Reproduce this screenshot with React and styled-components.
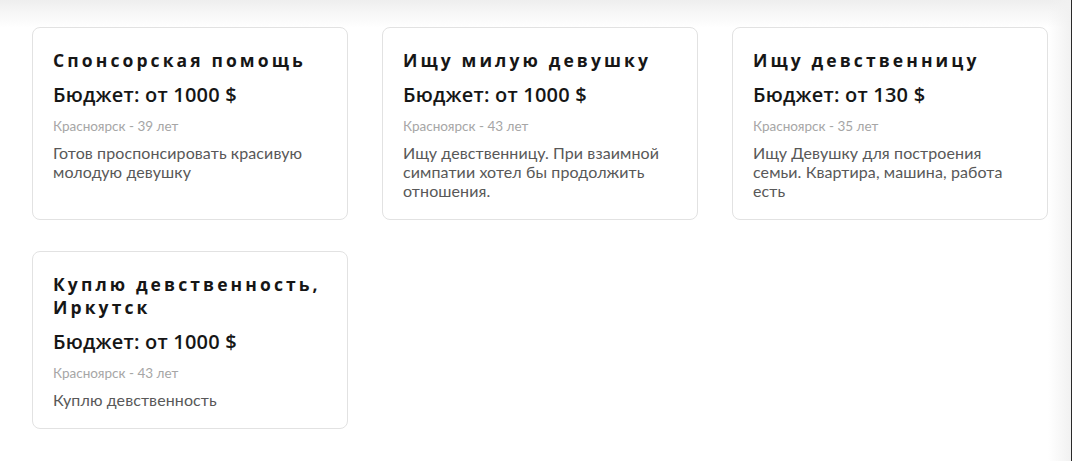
import React from 'react';
import styled, { createGlobalStyle } from 'styled-components';

const GlobalStyle = createGlobalStyle`
    html, body {
        margin: 0;
        padding: 0;
        background: #ffffff;
    }
    body {
        font-family: "Open Sans", "Lato", sans-serif;
    }
`;

const Page = styled.div`
    width: 1072px;
    height: 461px;
    box-sizing: border-box;
    overflow: hidden;
    background: linear-gradient(to bottom, #eeeeee 0px, #f6f6f6 12px, #ffffff 28px);
    display: flex;
`;

const Content = styled.div`
    flex: 1;
    padding: 27px 0 0 32px;
`;

const EdgeFade = styled.div`
    width: 30px;
    background: linear-gradient(to right, rgba(240,240,240,0) 0px, #f1f1f1 100%);
    border-right: 1.5px solid #2a2a2a;
`;

const Grid = styled.div`
    display: grid;
    grid-template-columns: repeat(3, 316px);
    column-gap: 34px;
    row-gap: 31px;
`;

const Card = styled.div`
    box-sizing: border-box;
    background: #ffffff;
    border: 1px solid #e2e2e2;
    border-radius: 8px;
    padding: 21px 20px 19px 20px;
    display: flex;
    flex-direction: column;
`;

const Title = styled.div`
    font-family: "Open Sans", sans-serif;
    font-weight: 700;
    font-size: 17.5px;
    line-height: 23px;
    letter-spacing: 3.1px;
    color: #161616;
`;

const Budget = styled.div`
    margin-top: 11px;
    font-family: "Open Sans", sans-serif;
    font-weight: 600;
    font-size: 20px;
    line-height: 24px;
    letter-spacing: 0.2px;
    color: #161616;
`;

const City = styled.div`
    margin-top: 10px;
    font-family: "Lato", sans-serif;
    font-size: 13.5px;
    line-height: 18px;
    color: #a6a6a6;
`;

const Description = styled.div`
    margin-top: 8px;
    font-family: "Lato", sans-serif;
    font-size: 16px;
    line-height: 19px;
    letter-spacing: 0.1px;
    color: #585858;
`;

const ads = [
    {
        title: 'Спонсорская помощь',
        budget: 'Бюджет: от 1000 $',
        city: 'Красноярск - 39 лет',
        text: 'Готов проспонсировать красивую молодую девушку',
    },
    {
        title: 'Ищу милую девушку',
        budget: 'Бюджет: от 1000 $',
        city: 'Красноярск - 43 лет',
        text: 'Ищу девственницу. При взаимной симпатии хотел бы продолжить отношения.',
    },
    {
        title: 'Ищу девственницу',
        budget: 'Бюджет: от 130 $',
        city: 'Красноярск - 35 лет',
        text: 'Ищу Девушку для построения семьи. Квартира, машина, работа есть',
    },
    {
        title: 'Куплю девственность, Иркутск',
        budget: 'Бюджет: от 1000 $',
        city: 'Красноярск - 43 лет',
        text: 'Куплю девственность',
    },
];

const App = () => (
    <>
        <GlobalStyle />
        <Page>
            <Content>
                <Grid>
                    {ads.map((ad, index) => (
                        <Card key={`ad-${index}`}>
                            <Title>{ad.title}</Title>
                            <Budget>{ad.budget}</Budget>
                            <City>{ad.city}</City>
                            <Description>{ad.text}</Description>
                        </Card>
                    ))}
                </Grid>
            </Content>
            <EdgeFade />
        </Page>
    </>
);

export default App;
